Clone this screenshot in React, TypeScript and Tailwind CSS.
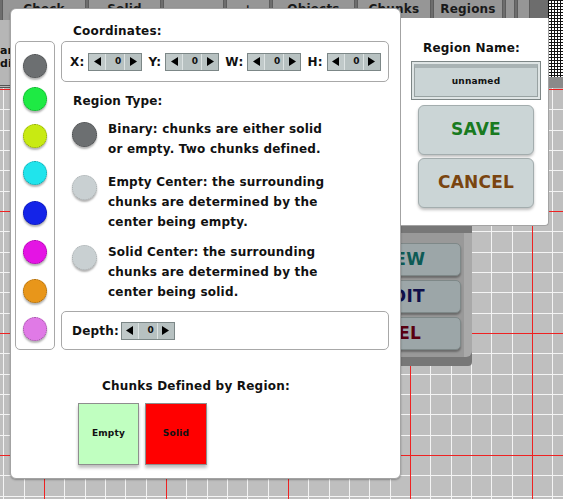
import React from 'react';

const circles = [
  { color: 'bg-[#6c6f71]', mt: 'mt-[12px]' },
  { color: 'bg-[#1eea44]', mt: 'mt-[9px]' },
  { color: 'bg-[#c8ea12]', mt: 'mt-[13px]' },
  { color: 'bg-[#20e4ec]', mt: 'mt-[13px]' },
  { color: 'bg-[#1424e8]', mt: 'mt-[16px]' },
  { color: 'bg-[#e414e4]', mt: 'mt-[15px]' },
  { color: 'bg-[#e8961a]', mt: 'mt-[15px]' },
  { color: 'bg-[#e07ae6]', mt: 'mt-[14px]' },
];

const tabs = [
  { label: 'Check', w: 'w-[84px]' },
  { label: 'Solid', w: 'w-[73px]' },
  { label: '-', w: 'w-[61px]' },
  { label: '+', w: 'w-[44px]' },
  { label: 'Objects', w: 'w-[83px]' },
  { label: 'Chunks', w: 'w-[74px]' },
  { label: 'Regions', w: 'w-[70px]' },
  { label: '', w: 'w-[10px]' },
  { label: '', w: 'w-[13px]' },
];

const Dot = ({ className }: { className: string }) => (
  <div className={`rounded-full border border-dotted shadow-[0_2px_2px_rgba(0,0,0,0.3)] ${className}`} />
);

const Spinner = () => (
  <div className="flex h-[18px] w-[54px] shrink-0 border border-[#7c8787] bg-[#b7c1c1]">
    <div className="flex w-[17px] items-center justify-center border-r border-[#dde3e3] bg-[#c0c9c9]">
      <svg width="7" height="9" viewBox="0 0 7 9">
        <path d="M7 0V9L0 4.5Z" fill="#000" />
      </svg>
    </div>
    <div className="flex flex-1 items-center justify-end pr-[3px] text-[9px] leading-none">0</div>
    <div className="flex w-[17px] items-center justify-center border-l border-[#dde3e3]">
      <svg width="7" height="9" viewBox="0 0 7 9">
        <path d="M0 0V9L7 4.5Z" fill="#000" />
      </svg>
    </div>
  </div>
);

const Coord = ({ label }: { label: string }) => (
  <div className="flex items-center gap-[4px]">
    <span>{label}</span>
    <Spinner />
  </div>
);

const Option = ({ selected, lines, className }: { selected: boolean; lines: string[]; className: string }) => (
  <div className={`flex pl-[11px] ${className}`}>
    <Dot
      className={`mt-[3px] h-[25px] w-[25px] shrink-0 ${
        selected ? 'border-[rgba(0,0,0,0.35)] bg-[#6c6f71]' : 'border-[rgba(0,0,0,0.15)] bg-[#c9d0d2]'
      }`}
    />
    <div className="pl-[11px] leading-[20px]">
      {lines.map((l) => (
        <div key={l}>{l}</div>
      ))}
    </div>
  </div>
);

export default function App() {
  return (
    // canvas grid: 122px tiles, red edge + six white cell lines each way
    <div className="relative h-[499px] w-[563px] overflow-hidden bg-[#bfbfbf] bg-[linear-gradient(to_right,#ee2222_1px,transparent_1px),linear-gradient(to_bottom,#ee2222_1px,transparent_1px),repeating-linear-gradient(to_right,#f4f4f4_0_1px,transparent_1px_20.333px),repeating-linear-gradient(to_bottom,#f4f4f4_0_1px,transparent_1px_20.333px)] bg-[size:122px_122px] bg-[position:44px_89px] font-['DejaVu_Sans',sans-serif] text-[12px] font-bold tracking-[0.2px] text-[#111]">
      {/* editor chrome above the canvas */}
      <div className="flex h-[88px]">
        <div className="flex flex-1 flex-col">
          <div className="flex h-[20px] gap-[2px] bg-[#6d6d6d] pl-[2px]">
            {tabs.map((t, i) => (
              <div
                key={i}
                className={`${t.w} h-[20px] border-x border-[#5c5c5c] bg-[#969696] pt-[2px] text-center leading-[14px] text-[#1a1a1a]`}
              >
                {t.label}
              </div>
            ))}
          </div>
          <div className="flex-1 border-b-[3px] border-double border-[#555] bg-[#b6b6b6] pt-[24px] text-[11px] leading-[13px]">
            <div>ar</div>
            <div>di</div>
          </div>
        </div>
        <div className="flex w-[15px] flex-col">
          <svg width="15" height="77" className="block">
            <defs>
              <pattern id="mesh" width="3" height="3" patternUnits="userSpaceOnUse">
                <rect width="3" height="3" fill="#111" />
                <rect x="1" y="1" width="2" height="2" fill="#fff" />
              </pattern>
            </defs>
            <rect width="15" height="77" fill="url(#mesh)" />
          </svg>
          <div className="flex-1 bg-[#8a8a8a]" />
        </div>
      </div>

      {/* floating tool panel partly hidden */}
      <div className="absolute left-[330px] top-[226px] w-[142px] rounded-br-[4px] bg-[#777] pb-[9px] pt-[7px]">
        <div className="flex flex-col gap-[4px] rounded-br-[6px] border-r-[8px] border-[#a9a9a9] bg-[#999] pb-[7px] pl-[14px] pt-[10px]">
          {[
            { t: 'NEW', c: 'text-[#0d5a55]' },
            { t: 'EDIT', c: 'text-[#10104a]' },
            { t: 'DEL', c: 'text-[#5a0010]' },
          ].map((b) => (
            <div
              key={b.t}
              className={`flex h-[33px] w-[117px] items-center justify-center rounded-[5px] border border-[#7e8888] bg-[#9ca6a8] text-[17px] shadow-[0_2px_2px_rgba(0,0,0,0.3)] ${b.c}`}
            >
              {b.t}
            </div>
          ))}
        </div>
      </div>

      {/* region dialog */}
      <div className="absolute left-[10px] top-[8px] h-[471px] w-[391px] rounded-[6px] border border-[#a3a3a3] bg-white shadow-[0_1px_2px_rgba(0,0,0,0.3)]">
        <div className="flex gap-[6px] pl-[4px]">
          <div className="mt-[32px] flex h-[309px] w-[40px] flex-col items-center rounded-[5px] border border-[#a8a8a8]">
            {circles.map((c, i) => (
              <Dot key={i} className={`h-[24px] w-[24px] shrink-0 border-[rgba(0,0,0,0.3)] ${c.color} ${c.mt}`} />
            ))}
          </div>
          <div className="flex w-[328px] flex-col">
            <div className="h-[32px] pl-[12px] pt-[15px] leading-[14px]">Coordinates:</div>
            <div className="flex h-[41px] items-center gap-[6px] rounded-[5px] border border-[#a8a8a8] pl-[8px]">
              <Coord label="X:" />
              <Coord label="Y:" />
              <Coord label="W:" />
              <Coord label="H:" />
            </div>
            <div className="mt-[12px] pl-[12px] leading-[14px]">Region Type:</div>
            <Option
              className="mt-[11px]"
              selected
              lines={['Binary: chunks are either solid', 'or empty. Two chunks defined.']}
            />
            <Option
              className="mt-[13px]"
              selected={false}
              lines={['Empty Center: the surrounding', 'chunks are determined by the', 'center being empty.']}
            />
            <Option
              className="mt-[10px]"
              selected={false}
              lines={['Solid Center: the surrounding', 'chunks are determined by the', 'center being solid.']}
            />
            <div className="mt-[9px] flex h-[39px] items-center gap-[2px] rounded-[5px] border border-[#a8a8a8] pl-[10px]">
              <span>Depth:</span>
              <Spinner />
            </div>
          </div>
        </div>
        <div className="mt-[29px] pl-[91px] leading-[14px]">Chunks Defined by Region:</div>
        <div className="mt-[10px] flex gap-[6px] pl-[67px]">
          <div className="flex h-[62px] w-[61px] items-center justify-center border border-[#8e8e8e] bg-[#c0ffc0] text-[9px] shadow-[0_3px_3px_rgba(0,0,0,0.25)]">
            Empty
          </div>
          <div className="flex h-[62px] w-[62px] items-center justify-center border border-[#8e8e8e] bg-[#ff0000] text-[9px] shadow-[0_3px_3px_rgba(0,0,0,0.25)]">
            Solid
          </div>
        </div>
      </div>

      {/* region name panel */}
      <div className="absolute left-[401px] top-[18px] h-[208px] w-[148px] rounded-br-[4px] border-b border-r border-[#a3a3a3] bg-white">
        <div className="pl-[22px] pt-[23px] leading-[14px]">Region Name:</div>
        <div className="ml-[10px] mt-[6px] h-[39px] w-[130px] border border-[#7d8686] bg-[#dfe5e5] p-[2px]">
          <div className="flex h-full items-center justify-center border border-[#98a2a2] border-t-[4px] border-t-[#a9b3b4] bg-[#cad4d5] text-[9px]">
            unnamed
          </div>
        </div>
        <div className="ml-[17px] mt-[5px] flex w-[116px] flex-col gap-[3px]">
          <div className="flex h-[50px] items-center justify-center rounded-[6px] border border-[#a3adae] bg-[#cbd5d6] text-[17px] text-[#197a20] shadow-[0_2px_3px_rgba(0,0,0,0.25)]">
            SAVE
          </div>
          <div className="flex h-[50px] items-center justify-center rounded-[6px] border border-[#a3adae] bg-[#cbd5d6] text-[17px] text-[#7a4510] shadow-[0_2px_3px_rgba(0,0,0,0.25)]">
            CANCEL
          </div>
        </div>
      </div>
    </div>
  );
}
